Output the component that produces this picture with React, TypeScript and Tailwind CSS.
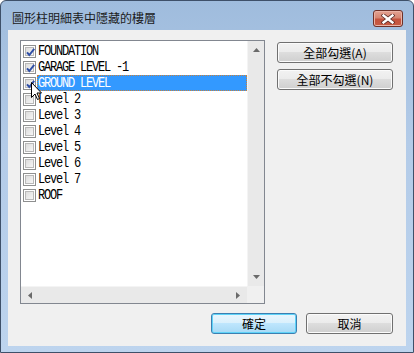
import React from "react";

const items = [
  { label: "FOUNDATION", checked: true },
  { label: "GARAGE LEVEL -1", checked: true },
  { label: "GROUND LEVEL", checked: true, selected: true },
  { label: "Level 2", checked: false },
  { label: "Level 3", checked: false },
  { label: "Level 4", checked: false },
  { label: "Level 5", checked: false },
  { label: "Level 6", checked: false },
  { label: "Level 7", checked: false },
  { label: "ROOF", checked: false },
];

function CheckBox({ checked }: { checked: boolean }) {
  return (
    <div className="w-[13px] h-[13px] border border-[#8e8f8f] bg-white p-[1px] shrink-0">
      <div className="w-full h-full border border-[#b9b9b9] bg-[linear-gradient(135deg,#dcdcdc_0%,#f6f6f6_100%)] relative">
        {checked && (
          <svg width="11" height="11" viewBox="0 0 11 11" className="absolute left-[-1px] top-[-1px]">
            <path d="M2 5.3 L4.3 8 L9.2 1.8" fill="none" stroke="#2f4fa6" strokeWidth="2" strokeLinejoin="miter" />
          </svg>
        )}
      </div>
    </div>
  );
}

function Btn({ children, primary, w }: { children: React.ReactNode; primary?: boolean; w: string }) {
  const base =
    "h-[21px] rounded-[3px] border flex items-center justify-center text-[12px] leading-none text-black " + w + " ";
  const style = primary
    ? "border-[#3c7fb1] bg-[linear-gradient(to_bottom,#eaf6fd_0%,#d9f0fc_50%,#bee6fd_50%,#a7d9f5_100%)] shadow-[inset_0_0_0_1px_#5fd3f8]"
    : "border-[#707070] bg-[linear-gradient(to_bottom,#f2f2f2_0%,#ebebeb_50%,#dddddd_50%,#cfcfcf_100%)] shadow-[inset_0_0_0_1px_#fbfbfb]";
  return (
    <div className={base + style} style={{ fontFamily: '"Noto Sans CJK TC", "Liberation Sans", sans-serif' }}>
      {children}
    </div>
  );
}

export default function App() {
  return (
    <div className="w-[414px] h-[353px] bg-white relative overflow-hidden">
      <div className="w-full h-full flex flex-col rounded-t-[6px] border border-[#3e5069] bg-[linear-gradient(to_bottom,#9fbcdd_0%,#b3cbe8_40%,#bdd4ee_100%)] px-[7px] pb-[6px]">
        {/* title bar */}
        <div className="h-[29px] flex items-start pt-[9px] shrink-0">
          <div
            className="pl-[4px] text-[12px] leading-[16px] text-[#1b1b1b]"
            style={{ fontFamily: '"Noto Sans CJK TC", "Liberation Sans", sans-serif' }}
          >
            圖形柱明細表中隱藏的樓層
          </div>
          <div className="ml-auto mr-[3px] w-[30px] h-[17px] rounded-[3px] border border-[#6e3128] bg-[linear-gradient(to_bottom,#e3a393_0%,#d68672_45%,#c4533e_55%,#c75b43_100%)] shadow-[inset_0_0_0_1px_#e9b3a6] flex items-center justify-center">
            <svg width="14" height="10" viewBox="0 0 14 10">
              <path d="M2.5 1.5 L11.5 8.5 M11.5 1.5 L2.5 8.5" stroke="#5a2a25" strokeWidth="4" strokeLinecap="square" />
              <path d="M2.5 1.5 L11.5 8.5 M11.5 1.5 L2.5 8.5" stroke="#ffffff" strokeWidth="2.4" strokeLinecap="square" />
            </svg>
          </div>
        </div>
        {/* content */}
        <div className="flex-1 bg-[#f0f0f0] flex flex-col pt-[10px] pl-[12px] pr-[13px]">
          <div className="flex">
            {/* listbox */}
            <div className="w-[245px] h-[264px] border border-[#828790] bg-white grid grid-cols-[1fr_17px] grid-rows-[1fr_17px] shrink-0">
              <div className="pt-[2px] pl-[2px] overflow-hidden">
                {items.map((it) => (
                  <div key={it.label} className="h-[16px] flex items-center">
                    <CheckBox checked={it.checked} />
                    <div
                      className={
                        "ml-[1px] flex-1 h-[16px] flex items-center text-[12px] tracking-[-1.2px] whitespace-pre " +
                        (it.selected
                          ? "bg-[#3399ff] text-white border border-dotted border-[#c8813c]"
                          : "text-black pl-[1px]")
                      }
                      style={{ fontFamily: '"Liberation Mono", monospace' }}
                    >
                      <span className="inline-block scale-y-[1.2]">{it.label}</span>
                    </div>
                  </div>
                ))}
              </div>
              {/* vertical scrollbar */}
              <div className="bg-[#e9e9e9] border-l border-[#f4f4f4] flex flex-col items-center justify-between py-[7px]">
                <svg width="7" height="4" viewBox="0 0 7 4">
                  <path d="M0 4 L3.5 0 L7 4 Z" fill="#6a6a6a" />
                </svg>
                <svg width="7" height="4" viewBox="0 0 7 4">
                  <path d="M0 0 L3.5 4 L7 0 Z" fill="#6a6a6a" />
                </svg>
              </div>
              {/* horizontal scrollbar */}
              <div className="bg-[#e9e9e9] border-t border-[#f4f4f4] flex items-center justify-between px-[7px]">
                <svg width="4" height="7" viewBox="0 0 4 7">
                  <path d="M4 0 L0 3.5 L4 7 Z" fill="#6a6a6a" />
                </svg>
                <svg width="4" height="7" viewBox="0 0 4 7">
                  <path d="M0 0 L4 3.5 L0 7 Z" fill="#6a6a6a" />
                </svg>
              </div>
              <div className="bg-[#f0f0f0]" />
            </div>
            {/* right buttons */}
            <div className="ml-[12px] mt-[2px] flex flex-col gap-[6px]">
              <Btn w="w-[116px]">全部勾選(A)</Btn>
              <Btn w="w-[116px]">全部不勾選(N)</Btn>
            </div>
          </div>
          {/* bottom buttons */}
          <div className="mt-[9px] flex justify-end gap-[9px]">
            <Btn primary w="w-[86px]">確定</Btn>
            <Btn w="w-[87px]">取消</Btn>
          </div>
        </div>
      </div>
      {/* mouse cursor */}
      <svg width="13" height="20" viewBox="0 0 13 20" className="absolute left-[30px] top-[81px]">
        <path
          d="M1.5 1.5 L1.5 16.5 L5 13 L7.5 18.5 L9.5 17.5 L7 12 L11.5 12 Z"
          fill="#ffffff"
          stroke="#000000"
          strokeWidth="1"
          strokeLinejoin="miter"
        />
      </svg>
    </div>
  );
}
